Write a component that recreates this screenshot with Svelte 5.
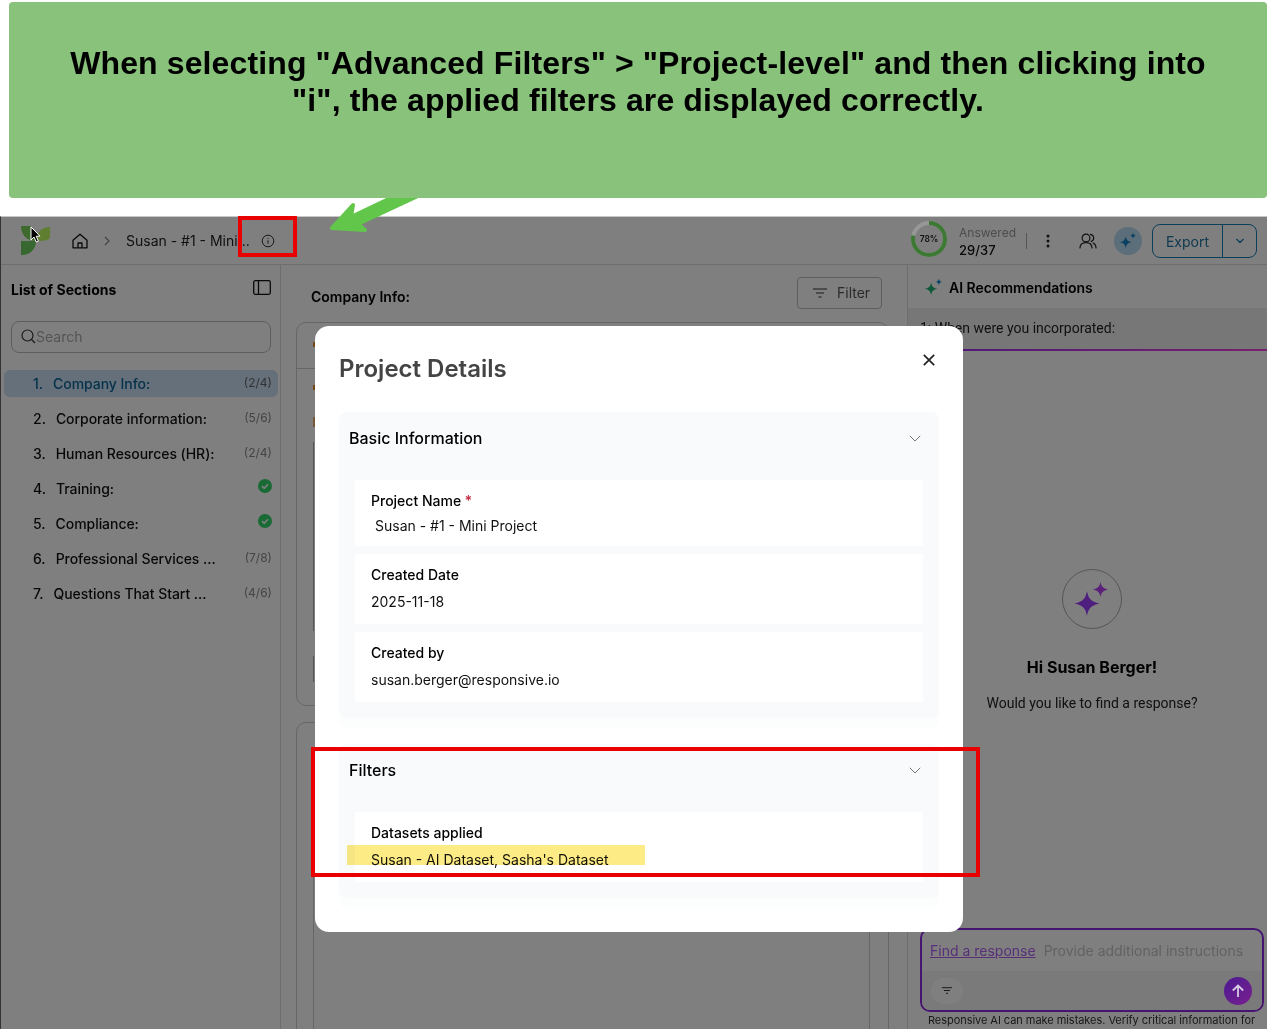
<script lang="ts">
  const sections = [
    { no: "1.", name: "Company Info:", count: "(2/4)", active: true },
    { no: "2.", name: "Corporate information:", count: "(5/6)" },
    { no: "3.", name: "Human Resources (HR):", count: "(2/4)" },
    { no: "4.", name: "Training:", done: true },
    { no: "5.", name: "Compliance:", done: true },
    { no: "6.", name: "Professional Services ...", count: "(7/8)" },
    { no: "7.", name: "Questions That Start ...", count: "(4/6)" },
  ];

  const details = [
    { label: "Project Name", value: "Susan - #1 - Mini Project", required: true },
    { label: "Created Date", value: "2025-11-18" },
    { label: "Created by", value: "susan.berger@responsive.io" },
  ];
</script>

<div class="page">
  <div class="callout">
    <h1>When selecting "Advanced Filters" &gt; "Project-level" and then clicking into "i", the applied filters are displayed correctly.</h1>
  </div>

  <div class="app">
    <header class="topbar">
      <svg class="logo" width="29" height="29" viewBox="0 0 29 29">
        <path d="M0 0h9c4 2 6 8 6 15C7 15 0 10 0 0z" fill="#7ed45c" />
        <path d="M29 1v11c-3 3-8 3-14 3 0-8 6-14 14-14z" fill="#befc60" />
        <path d="M0 15h15c0 8-6 14-14 14H0z" fill="#6ed05e" />
      </svg>
      <svg class="home" width="16" height="16" viewBox="0 0 16 16" fill="none" stroke="#111" stroke-width="1.3" stroke-linejoin="round">
        <path d="M1 7.200 8 1.200l7 6v7.600H1z" />
        <path d="M6 14.800V10h4v4.800" />
      </svg>
      <svg class="crumb" width="8" height="10" viewBox="0 0 8 10" fill="none" stroke="#888" stroke-width="1.2"><path d="M2 1l4 4-4 4" /></svg>
      <span class="project">Susan - #1 - Mini...</span>
      <svg class="info" width="14" height="14" viewBox="0 0 14 14" fill="none" stroke="#333" stroke-width="1">
        <circle cx="7" cy="7" r="5.800" />
        <path d="M7 6.200v3.600M7 4v1" />
      </svg>

      <div class="spacer"></div>

      <div class="donut">
        <svg width="36" height="36" viewBox="0 0 36 36" fill="none" stroke-width="4">
          <circle cx="18" cy="18" r="16" stroke="#979797" />
          <circle cx="18" cy="18" r="16" stroke="#3c7a33" stroke-dasharray="78.400 100.500" transform="rotate(-90 18 18)" />
        </svg>
        <span>78%</span>
      </div>
      <div class="progress">
        <span class="answered">Answered</span>
        <span class="ratio">29/37</span>
      </div>
      <div class="divider"></div>
      <svg class="kebab" width="4" height="14" viewBox="0 0 4 14" fill="#222"><circle cx="2" cy="2" r="1.500" /><circle cx="2" cy="7" r="1.500" /><circle cx="2" cy="12" r="1.500" /></svg>
      <svg class="users" width="18" height="16" viewBox="0 0 18 16" fill="none" stroke="#222" stroke-width="1.200" stroke-linecap="round">
        <circle cx="7" cy="5" r="3.900" />
        <path d="M1 15c0-3.600 2.500-5.400 6-5.400s6 1.800 6 5.400" />
        <path d="M11.500 1.400c2 .4 3.200 1.900 3.200 3.600s-1 3-2.600 3.500M14 10c2 .8 3 2.600 3 5" />
      </svg>
      <div class="spark-btn">
        <svg width="18" height="18" viewBox="0 0 16 16" fill="#1680c0">
          <path d="M6 3.500C6.500 7 8 8.600 11.500 9 8 9.400 6.500 11 6 14.500 5.500 11 4 9.400.5 9 4 8.600 5.500 7 6 3.500z" />
          <path d="M12.500.5c.3 1.800 1 2.500 2.800 2.800-1.800.3-2.500 1-2.800 2.800-.3-1.800-1-2.500-2.800-2.800 1.800-.3 2.500-1 2.800-2.800z" />
        </svg>
      </div>
      <div class="export">
        <span class="export-label">Export</span>
        <span class="export-caret">
          <svg width="10" height="6" viewBox="0 0 10 6" fill="none" stroke="#187fb4" stroke-width="1.400"><path d="M1.500 1 5 4.500 8.500 1" /></svg>
        </span>
      </div>
    </header>

    <div class="workspace">
      <aside class="sidebar">
        <div class="side-head">
          <b>List of Sections</b>
          <svg width="18" height="15" viewBox="0 0 18 15" fill="none" stroke="#111" stroke-width="1.300"><rect x=".7" y=".7" width="16.600" height="13.600" rx="1.500" /><path d="M5.500 .7v13.600" /></svg>
        </div>
        <div class="search">
          <svg width="15" height="15" viewBox="0 0 15 15" fill="none" stroke="#333" stroke-width="1.200"><circle cx="6.500" cy="6.500" r="5.500" /><path d="m10.500 10.500 3.500 3.500" /></svg>
          <span>Search</span>
        </div>
        <ul class="section-list">
          {#each sections as s}
            <li class:active={s.active}>
              <span class="num">{s.no}</span>
              <span class="name">{s.name}</span>
              {#if s.done}
                <svg class="check" width="14" height="14" viewBox="0 0 14 14">
                  <circle cx="7" cy="7" r="7" fill="#34d46a" />
                  <path d="M4 7.200 6.200 9.300 10 5.200" fill="none" stroke="#fff" stroke-width="1.600" />
                </svg>
              {:else}
                <span class="count">{s.count}</span>
              {/if}
            </li>
          {/each}
        </ul>
      </aside>

      <main class="content">
        <div class="content-head">
          <b>Company Info:</b>
          <div class="filter-btn">
            <svg width="14" height="10" viewBox="0 0 14 10" fill="none" stroke="#333" stroke-width="1.200"><path d="M0 1h14M3 5h8M5.500 9h3" /></svg>
            <span>Filter</span>
          </div>
        </div>
        <div class="card first">
          <div class="q-row head"><i></i></div>
          <div class="q-row second-row"><i></i></div>
          <div class="q-row third-row"><i></i></div>
          <div class="q-box big"></div>
          <div class="q-box small"></div>
        </div>
        <div class="card second">
          <div class="answer-box"></div>
        </div>
      </main>

      <section class="ai-panel">
        <div class="ai-head">
          <svg width="21" height="19" viewBox="0 0 16 16">
            <path fill="#1fb070" d="M6 3.500C6.500 7 8 8.600 11.500 9 8 9.400 6.500 11 6 14.500 5.500 11 4 9.400.5 9 4 8.600 5.500 7 6 3.500z" />
            <path fill="#1a8fd0" d="M12.500.5c.3 1.800 1 2.500 2.800 2.800-1.800.3-2.500 1-2.800 2.800-.3-1.800-1-2.500-2.800-2.800 1.800-.3 2.500-1 2.800-2.800z" />
          </svg>
          <b>AI Recommendations</b>
        </div>
        <div class="ai-question">1: When were you incorporated:</div>
        <div class="ai-empty">
          <div class="ai-circle">
            <svg width="36" height="38" viewBox="0 0 36 38" fill="#9e3eff">
              <path d="M13 11c1.200 7.500 4 10.500 12.500 12.500C17 25.500 14.200 28.500 13 36 11.800 28.500 9 25.500.5 23.500 9 21.500 11.800 18.500 13 11z" />
              <path fill="#b840f0" d="M26.500 2c.9 4.500 2.500 6.300 7.500 7.500-5 1.200-6.600 3-7.500 7.500-.9-4.500-2.500-6.300-7.500-7.500 5-1.200 6.600-3 7.500-7.500z" />
            </svg>
          </div>
          <h2>Hi Susan Berger!</h2>
          <p>Would you like to find a response?</p>
        </div>
        <div class="composer">
          <div class="composer-top">
            <u>Find a response</u>
            <span>Provide additional instructions</span>
          </div>
          <div class="composer-bottom">
            <span class="chip">
              <svg width="10" height="7" viewBox="0 0 10 7" fill="none" stroke="#333" stroke-width="1"><path d="M0 .7h10M2 3.500h6M4 6.300h2" /></svg>
            </span>
            <span class="send">
              <svg width="14" height="14" viewBox="0 0 14 14" fill="none" stroke="#d8cbe6" stroke-width="1.800"><path d="M7 13V1.500M1.800 6.500 7 1.500l5.200 5" /></svg>
            </span>
          </div>
        </div>
        <p class="disclaimer">Responsive AI can make mistakes. Verify critical information for</p>
      </section>
    </div>

    <div class="backdrop"></div>

    <div class="modal">
      <svg class="close" width="12" height="12" viewBox="0 0 12 12" fill="none" stroke="#222" stroke-width="1.700"><path d="M.8.8l10.400 10.400M11.200.8.8 11.200" /></svg>
      <h2 class="modal-title">Project Details</h2>

      <div class="accordion">
        <div class="acc-head">
          <span>Basic Information</span>
          <svg width="12" height="7" viewBox="0 0 12 7" fill="none" stroke="#777" stroke-width="1"><path d="M.8.8 6 6l5.200-5.200" /></svg>
        </div>
        <div class="acc-body">
          {#each details as d}
            <div class="field">
              <div class="field-label">{d.label}{#if d.required}<span class="req">&nbsp;*</span>{/if}</div>
              <div class="field-value" class:indent={d.required}>{d.value}</div>
            </div>
          {/each}
        </div>
      </div>

      <div class="accordion filters">
        <div class="acc-head">
          <span>Filters</span>
          <svg width="12" height="7" viewBox="0 0 12 7" fill="none" stroke="#777" stroke-width="1"><path d="M.8.8 6 6l5.200-5.200" /></svg>
        </div>
        <div class="acc-body">
          <div class="field dataset">
            <div class="field-label">Datasets applied</div>
            <div class="field-value">Susan - AI Dataset, Sasha's Dataset</div>
          </div>
        </div>
      </div>
    </div>
  </div>

  <!-- annotations drawn on top of the screenshot -->
  <div class="highlight"></div>
  <div class="red-box info-box"></div>
  <div class="red-box filters-box"></div>
  <svg class="arrow" width="100" height="50" viewBox="0 0 100 50">
    <path d="M7 33 28 10 26 22 72 0 95 0 33 29 40 35z" fill="#62c64b" stroke="#62c64b" stroke-width="4" stroke-linejoin="round" />
  </svg>
  <svg class="cursor" width="12" height="18" viewBox="0 0 12 18">
    <path d="M1 1v13l3-3 2.200 5 2.200-1-2.200-4.800H10z" fill="#000" stroke="#fff" stroke-width="1" />
  </svg>
</div>

<style>
  :global(body) {
    background: #fff;
    overflow: hidden;
  }

  .page {
    position: relative;
    width: 1269px;
    height: 1029px;
    overflow: hidden;
    font-family: Inter, "Liberation Sans", sans-serif;
    color: #111;
  }

  .callout {
    height: 196px;
    margin: 2px 2px 0 9px;
    box-sizing: border-box;
    padding: 43px 40px 0;
    background: #88c27b;
    border-radius: 4px;
    position: relative;
    z-index: 4;
  }

  .callout h1 {
    margin: 0;
    text-align: center;
    font: bold 32px/37px "Liberation Sans", Arial, sans-serif;
    letter-spacing: 0.12px;
    color: #000;
  }

  .app {
    position: relative;
    margin: 18px 2px 0 0;
    height: 813px;
    box-sizing: border-box;
    border-left: 1px solid #333;
    border-top: 1px solid #c8c8c8;
    background: #fff;
    display: flex;
    flex-direction: column;
  }

  .backdrop {
    position: absolute;
    inset: 0;
    z-index: 2;
    background: rgba(0, 0, 0, 0.5);
  }

  .topbar {
    height: 47px;
    flex: none;
    display: flex;
    align-items: center;
    border-bottom: 1px solid #ddd;
    padding: 0 10px 0 20px;
    font-size: 14px;
  }

  .logo { margin: -1px 0 0 0; }
  .home { margin: 1px 0 0 22px; }
  .crumb { margin: 1px 0 0 15px; }
  .project { margin: 0 0 0 15px; white-space: nowrap; color: #222; }
  .info { margin: 1px 0 0 11px; }
  .spacer { flex: 1; }

  .donut {
    position: relative;
    z-index: 3;
    width: 36px;
    height: 36px;
    margin-top: -3px;
  }
  .donut span {
    position: absolute;
    inset: 0;
    text-align: center;
    font-size: 8.500px;
    font-weight: 600;
    line-height: 36px;
    color: #111;
  }

  .progress {
    display: flex;
    flex-direction: column;
    margin: 2px 0 0 12px;
    gap: 2px;
    font-size: 12px;
  }
  .answered { color: #999; line-height: 15px; }
  .ratio { font-size: 13px; font-weight: 500; color: #111; line-height: 16px; }

  .divider {
    width: 1px;
    height: 16px;
    background: #aaa;
    margin-left: 10px;
  }
  .kebab { margin-left: 19px; }
  .users { margin-left: 29px; }

  .spark-btn {
    width: 28px;
    height: 28px;
    border-radius: 50%;
    background: #b9dcf2;
    margin-left: 17px;
    display: flex;
    align-items: center;
    justify-content: center;
  }

  .export {
    display: flex;
    height: 34px;
    box-sizing: border-box;
    margin-left: 10px;
    border: 1px solid #187fb4;
    border-radius: 8px;
  }
  .export-label {
    width: 69px;
    text-align: center;
    line-height: 34px;
    color: #2474a0;
    border-right: 1px solid #187fb4;
  }
  .export-caret {
    width: 33px;
    display: flex;
    align-items: center;
    justify-content: center;
  }

  .workspace {
    flex: 1;
    min-height: 0;
    display: flex;
  }

  .sidebar {
    width: 280px;
    flex: none;
    box-sizing: border-box;
    border-right: 1px solid #ddd;
    font-size: 14px;
  }

  .side-head {
    display: flex;
    align-items: center;
    justify-content: space-between;
    padding: 12px 9px 0 10px;
    height: 24px;
  }
  .side-head b { font-weight: 700; color: #000; }
  .side-head svg { margin-top: -4px; }

  .search {
    margin: 20px 9px 0 10px;
    height: 32px;
    box-sizing: border-box;
    border: 1px solid #bbb;
    border-radius: 8px;
    display: flex;
    align-items: center;
    padding: 0 9px 1px;
    color: #aaa;
  }

  .section-list {
    list-style: none;
    margin: 17px 0 0;
    padding: 0 2px 0 3px;
    display: flex;
    flex-direction: column;
    gap: 8px;
  }

  .section-list li {
    height: 27px;
    display: flex;
    align-items: center;
    gap: 10px;
    padding: 0 6px 0 29px;
    border-radius: 6px;
    color: #111;
  }
  .section-list li.active {
    background: #cae0f4;
    color: #0d6496;
  }
  .name { flex: 1; white-space: nowrap; font-weight: 500; letter-spacing: -0.05px; }
  .num { font-weight: 500; }
  .count { font-size: 12px; color: #888; margin-top: -3px; }
  .active .count { color: #666; }
  .check { margin-top: -6px; }

  .content {
    flex: 1;
    min-width: 0;
    box-sizing: border-box;
    padding: 0 18px 0 15px;
  }

  .content-head {
    height: 57px;
    display: flex;
    align-items: center;
    justify-content: space-between;
    padding: 0 7px 0 15px;
    font-size: 14px;
  }
  .content-head b { font-weight: 600; margin-top: 6px; color: #000; }

  .filter-btn {
    display: flex;
    align-items: center;
    gap: 10px;
    height: 32px;
    width: 85px;
    box-sizing: border-box;
    padding-left: 15px;
    margin-top: -2px;
    border: 1px solid #bbb;
    border-radius: 4px;
    color: #555;
  }

  .card {
    border: 1px solid #ccc;
    border-radius: 10px;
    box-sizing: border-box;
    position: relative;
  }
  .card.first { height: 384px; }
  .card.second {
    height: 400px;
    margin-top: 16px;
    padding: 78px 18px 0 16px;
  }

  .q-row { position: relative; }
  .q-row.head { height: 45px; border-bottom: 1px solid #ccc; }
  .q-row.second-row { height: 45px; }
  .q-row.third-row { height: 20px; }
  .q-row i {
    position: absolute;
    left: 16px;
    top: 16px;
    width: 2px;
    height: 5px;
    background: #e88a2a;
  }
  .q-row.head i { top: 19px; }
  .q-row.third-row i { top: 3px; height: 10px; background: #e8b070; }

  .q-box {
    margin-left: 16px;
    border-left: 1px solid #aaa;
  }
  .q-box.big { height: 189px; margin-top: 8px; }
  .q-box.small { height: 26px; margin-top: 25px; }

  .answer-box {
    height: 400px;
    border: 1px solid #ccc;
    border-radius: 6px;
  }

  .ai-panel {
    width: 360px;
    flex: none;
    box-sizing: border-box;
    border-left: 1px solid #ddd;
    display: flex;
    flex-direction: column;
    font-size: 14px;
    position: relative;
  }

  .ai-head {
    height: 41px;
    padding: 2px 0 0 15px;
    flex: none;
    display: flex;
    align-items: center;
    gap: 5px;
  }
  .ai-head b { font-weight: 600; color: #000; }

  .ai-question {
    height: 41px;
    flex: none;
    line-height: 40px;
    padding-left: 12px;
    background: #eee;
    color: #222;
    font-family: Roboto, sans-serif;
    border-bottom: 2px solid transparent;
    border-image: linear-gradient(90deg, #9333ea, #f040e0) 1;
  }

  .ai-empty {
    flex: 1;
    display: flex;
    flex-direction: column;
    align-items: center;
    padding: 218px 0 0 9px;
    color: #222;
    min-height: 0;
  }
  .ai-circle {
    width: 60px;
    height: 60px;
    box-sizing: border-box;
    border: 1px solid #aaa;
    border-radius: 50%;
    display: flex;
    align-items: center;
    justify-content: center;
  }
  .ai-empty h2 {
    margin: 28px 0 0;
    font-size: 16px;
    font-weight: 700;
    line-height: 20px;
    color: #000;
  }
  .ai-empty p {
    margin: 16px 0 0;
    line-height: 20px;
    font-family: Roboto, sans-serif;
  }

  .composer {
    flex: none;
    margin: 0 3px 0 12px;
    height: 84px;
    box-sizing: border-box;
    border: 2px solid #8a2be2;
    border-radius: 10px;
    overflow: hidden;
    display: flex;
    flex-direction: column;
  }
  .composer-top {
    height: 41px;
    flex: none;
    display: flex;
    align-items: center;
    gap: 8px;
    padding-left: 8px;
    color: #c4c4c4;
    white-space: nowrap;
  }
  .composer-top u { color: #b060f0; }
  .composer-bottom {
    flex: 1;
    background: #f4f4f4;
    display: flex;
    align-items: center;
    justify-content: space-between;
    padding: 0 10px 0 9px;
  }
  .chip {
    width: 32px;
    height: 26px;
    border-radius: 13px;
    background: #fff;
    display: flex;
    align-items: center;
    justify-content: center;
  }
  .send {
    position: relative;
    z-index: 3;
    width: 28px;
    height: 28px;
    border-radius: 50%;
    background: linear-gradient(135deg, #4a1a90, #7a2090);
    display: flex;
    align-items: center;
    justify-content: center;
  }

  .disclaimer {
    flex: none;
    margin: 1px 0 0 20px;
    font-size: 11px;
    line-height: 14px;
    letter-spacing: -0.05px;
    white-space: nowrap;
    color: #333;
    height: 16px;
  }

  .modal {
    position: absolute;
    z-index: 3;
    left: 314px;
    top: 109px;
    width: 648px;
    height: 606px;
    box-sizing: border-box;
    padding: 24px 24px 0;
    background: #fff;
    border-radius: 14px;
  }

  .close {
    position: absolute;
    top: 28px;
    right: 28px;
  }

  .modal-title {
    margin: 0;
    font-size: 24px;
    font-weight: 600;
    line-height: 38px;
    color: #444;
  }

  .accordion {
    margin-top: 24px;
    background: #f8fafc;
    border-radius: 8px;
    box-shadow: 0 10px 0 #fcfdfd;
    padding-bottom: 16px;
  }
  .accordion.filters { margin-top: 26px; }

  .acc-head {
    height: 52px;
    display: flex;
    align-items: center;
    justify-content: space-between;
    padding: 0 18px 0 10px;
    font-size: 16px;
    font-weight: 500;
    color: #000;
  }

  .acc-body {
    margin-top: 16px;
    padding: 0 16px;
    display: flex;
    flex-direction: column;
    gap: 8px;
  }

  .field {
    background: #fff;
    padding: 12px 16px 0;
    height: 70px;
    box-sizing: border-box;
    font-size: 14px;
    color: #111;
  }
  .field:first-child { height: 66px; }
  .dataset.field { height: 70px; }

  .field-label { line-height: 18px; font-weight: 500; color: #000; }
  .field-value { line-height: 18px; margin-top: 9px; }
  .field-value.indent { margin: 7px 0 0 4px; }
  .req { color: #c0243c; }

  .highlight {
    position: absolute;
    left: 347px;
    top: 845px;
    width: 298px;
    height: 20px;
    z-index: 5;
    background: #fdeb85;
    mix-blend-mode: multiply;
  }

  .red-box {
    position: absolute;
    z-index: 6;
    box-sizing: border-box;
    border: 4px solid #e90000;
  }
  .info-box { left: 238px; top: 216px; width: 59px; height: 41px; }
  .filters-box { left: 311px; top: 747px; width: 669px; height: 130px; }

  .arrow {
    position: absolute;
    left: 325px;
    top: 195px;
    z-index: 3;
    overflow: visible;
  }

  .cursor {
    position: absolute;
    left: 30px;
    top: 226px;
    z-index: 6;
  }
</style>
